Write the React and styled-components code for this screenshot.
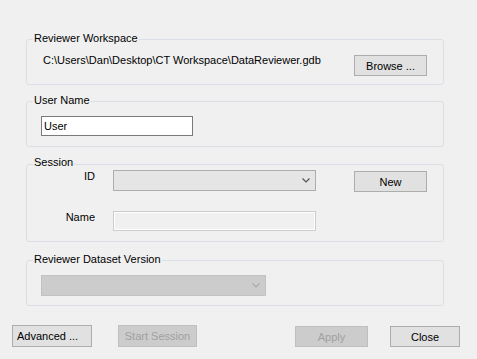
import React from 'react'
import styled, { createGlobalStyle } from 'styled-components'

const GlobalStyle = createGlobalStyle`
  html, body {
    margin: 0;
    padding: 0;
    background: #f0f0f0;
  }
  body {
    font-family: "Liberation Sans", Arial, sans-serif;
    font-size: 11px;
    color: #000;
  }
`

const Dialog = styled.div`
  width: 477px;
  height: 359px;
  box-sizing: border-box;
  padding-top: 39px;
  display: flex;
  flex-direction: column;
`

const GroupBox = styled.div`
  position: relative;
  box-sizing: border-box;
  width: 418px;
  margin: ${(p) => p.$top || 0}px 0 0 26px;
  padding: ${(p) => p.$pad};
  border: 1px solid #d9dfe5;
  border-radius: 3px;
`

// title sits over the top border line, like a WinForms GroupBox caption
const GroupTitle = styled.span`
  position: absolute;
  top: ${(p) => p.$lift || -9}px;
  left: 6px;
  padding: 0 1px;
  line-height: 14px;
  background: #f0f0f0;
  white-space: nowrap;
`

const PathRow = styled.div`
  display: flex;
  justify-content: space-between;
  align-items: flex-start;
`

const PathText = styled.span`
  line-height: 12px;
  margin-top: -1px;
`

const Button = styled.button`
  box-sizing: border-box;
  width: ${(p) => p.$w}px;
  height: ${(p) => p.$h || 21}px;
  margin: ${(p) => p.$mt || 0}px 0 0 ${(p) => p.$ml || 0}px;
  padding: 0 0 0 ${(p) => (p.$left ? 4 : 0)}px;
  text-align: ${(p) => (p.$left ? 'left' : 'center')};
  font-family: "Liberation Sans", Arial, sans-serif;
  font-size: 11px;
  color: #000;
  background: #e1e1e1;
  border: 1px solid #adadad;
  border-radius: 0;
  flex-shrink: 0;

  &:disabled {
    color: #a0a0a0;
    background: #cccccc;
    border-color: #bfbfbf;
  }
`

const TextBox = styled.input`
  box-sizing: border-box;
  display: block;
  width: ${(p) => p.$w}px;
  height: 20px;
  margin: 0;
  padding: 0 2px;
  font-family: "Liberation Sans", Arial, sans-serif;
  font-size: 11px;
  color: #000;
  background: #fff;
  border: 1px solid #7a7a7a;
  outline: none;

  &:disabled {
    background: #f0f0f0;
    border-color: #cccccc;
    box-shadow: inset 0 0 0 1px #fff;
  }
`

const ComboBox = styled.div`
  box-sizing: border-box;
  width: ${(p) => p.$w}px;
  height: 21px;
  display: flex;
  align-items: center;
  justify-content: flex-end;
  padding-right: 5px;
  background: ${(p) => (p.$disabled ? '#cccccc' : '#e5e5e5')};
  border: 1px solid ${(p) => (p.$disabled ? '#c2c2c2' : '#adadad')};
  color: ${(p) => (p.$disabled ? '#a8a8a8' : '#505050')};
  flex-shrink: 0;
`

const FieldRow = styled.div`
  display: flex;
  align-items: flex-start;
  margin-top: ${(p) => p.$top || 0}px;
`

const FieldLabel = styled.span`
  width: 54px;
  margin: -1px 18px 0 0;
  line-height: 14px;
  text-align: right;
  flex-shrink: 0;
`

const Footer = styled.div`
  display: flex;
  align-items: flex-start;
  margin-top: 19px;
  padding-left: 12px;
`

const Chevron = () => (
  <svg width="8" height="5" viewBox="0 0 8 5" fill="none">
    <path d="M0.5 0.5 L4 4 L7.5 0.5" stroke="currentColor" strokeWidth="1.1" />
  </svg>
)

const App = () => {
  return (
    <>
      <GlobalStyle />
      <Dialog>
        <GroupBox $pad="15px 16px 8px 16px">
          <GroupTitle>Reviewer Workspace</GroupTitle>
          <PathRow>
            <PathText>C:\Users\Dan\Desktop\CT Workspace\DataReviewer.gdb</PathText>
            <Button $w={73}>Browse ...</Button>
          </PathRow>
        </GroupBox>

        <GroupBox $top={16} $pad="14px 14px 10px 14px">
          <GroupTitle>User Name</GroupTitle>
          <TextBox $w={152} defaultValue="User" />
        </GroupBox>

        <GroupBox $top={17} $pad="5px 14px 10px 14px">
          <GroupTitle $lift={-10}>Session</GroupTitle>
          <FieldRow>
            <FieldLabel>ID</FieldLabel>
            <ComboBox $w={203}>
              <Chevron />
            </ComboBox>
            <Button $w={73} $ml={38} $mt={1}>New</Button>
          </FieldRow>
          <FieldRow $top={19}>
            <FieldLabel>Name</FieldLabel>
            <TextBox $w={203} disabled />
          </FieldRow>
        </GroupBox>

        <GroupBox $top={18} $pad="14px 14px 9px 14px">
          <GroupTitle>Reviewer Dataset Version</GroupTitle>
          <ComboBox $w={225} $disabled>
            <Chevron />
          </ComboBox>
        </GroupBox>

        <Footer>
          <Button $w={80} $h={22} $left>Advanced ...</Button>
          <Button $w={79} $h={22} $ml={26} disabled>Start Session</Button>
          <Button $w={73} $ml={98} $mt={1} disabled>Apply</Button>
          <Button $w={70} $ml={22} $mt={1}>Close</Button>
        </Footer>
      </Dialog>
    </>
  )
}

export default App
